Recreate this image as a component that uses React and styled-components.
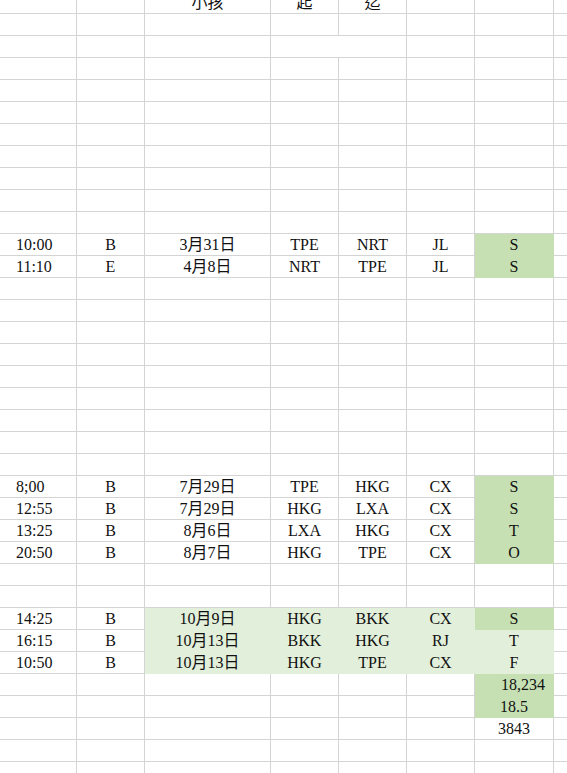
import styled, { createGlobalStyle } from "styled-components";

const LINE = "#d4d4d4";
const DARK = "#c6e0b4";
const LIGHT = "#e2efda";

const GlobalStyle = createGlobalStyle`
  html, body {
    margin: 0;
    background: #fff;
    overflow: hidden;
  }
`;

const View = styled.div`
  width: 567px;
  height: 773px;
  overflow: hidden;
  font-family: "Liberation Serif", "Noto Sans CJK TC", serif;
  font-size: 16px;
  color: #111;
`;

// sheet is scrolled a little, so the first row is cut at the top
const Sheet = styled.div`
  display: grid;
  grid-template-columns: 77px 68px 126px 68px 68px 68px 79px 40px;
  grid-auto-rows: 22px;
  margin-top: -8px;
`;

const Cell = styled.div`
  box-sizing: border-box;
  grid-column: span ${(p) => p.$span || 1};
  display: flex;
  align-items: center;
  justify-content: ${(p) =>
    p.$align === "left" ? "flex-start" : p.$align === "right" ? "flex-end" : "center"};
  padding: 0 ${(p) => p.$pad || 0}px;
  background: ${(p) => p.$fill || "#fff"};
  border-right: 1px solid ${(p) => p.$fill || LINE};
  border-bottom: 1px solid ${(p) => p.$fill || LINE};
  white-space: nowrap;
  overflow: hidden;
  line-height: 1;
`;

const empty = () => [{}, {}, {}, {}, {}, {}, {}, {}];

const flight = (time, cls, date, from, to, air, code, mid, end = DARK) => [
  { t: time, align: "left", pad: 16 },
  { t: cls },
  { t: date, fill: mid },
  { t: from, fill: mid },
  { t: to, fill: mid },
  { t: air, fill: mid },
  { t: code, fill: end },
  {},
];

const total = (cell) => [{}, {}, {}, {}, {}, {}, cell, {}];

const special = {
  0: [{}, {}, { t: "小孩" }, { t: "起" }, { t: "迄" }, {}, {}, {}],
  2: [{}, {}, {}, { span: 2 }, {}, {}, {}],
  11: flight("10:00", "B", "3月31日", "TPE", "NRT", "JL", "S"),
  12: flight("11:10", "E", "4月8日", "NRT", "TPE", "JL", "S"),
  22: flight("8;00", "B", "7月29日", "TPE", "HKG", "CX", "S"),
  23: flight("12:55", "B", "7月29日", "HKG", "LXA", "CX", "S"),
  24: flight("13:25", "B", "8月6日", "LXA", "HKG", "CX", "T"),
  25: flight("20:50", "B", "8月7日", "HKG", "TPE", "CX", "O"),
  28: flight("14:25", "B", "10月9日", "HKG", "BKK", "CX", "S", LIGHT, DARK),
  29: flight("16:15", "B", "10月13日", "BKK", "HKG", "RJ", "T", LIGHT, LIGHT),
  30: flight("10:50", "B", "10月13日", "HKG", "TPE", "CX", "F", LIGHT, LIGHT),
  31: total({ t: "18,234", fill: DARK, align: "right", pad: 8 }),
  32: total({ t: "18.5", fill: DARK }),
  33: total({ t: "3843" }),
};

const rows = Array.from({ length: 36 }, (_, i) => special[i] || empty());

function App() {
  return (
    <View>
      <GlobalStyle />
      <Sheet>
        {rows.map((row, r) =>
          row.map((c, i) => (
            <Cell key={`${r}-${i}`} $fill={c.fill} $align={c.align} $pad={c.pad} $span={c.span}>
              {c.t}
            </Cell>
          ))
        )}
      </Sheet>
    </View>
  );
}

export default App;
